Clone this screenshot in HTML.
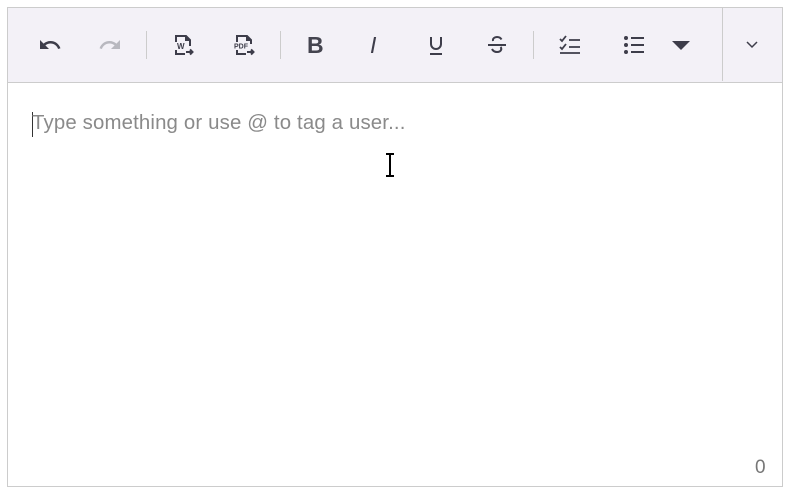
<!DOCTYPE html>
<html><head><meta charset="utf-8"><style>
html,body{margin:0;padding:0;background:#fff;width:789px;height:493px;overflow:hidden;font-family:"Liberation Sans",Roboto,sans-serif}
.box{position:absolute;left:7px;top:7px;width:774px;height:478px;border:1px solid #ccc;}
.tb{position:absolute;left:0;top:0;width:774px;height:74px;background:#f3f1f7;border-bottom:1px solid #ccc}
.ic{position:absolute;top:25px}
.sep{position:absolute;top:23px;width:1px;height:28px;background:#ccc}
.ph{position:absolute;left:24px;top:104px;font-size:20.4px;color:#8a8a8a;letter-spacing:0.15px}
.caret{position:absolute;left:24px;top:104px;width:1px;height:25px;background:#333}
.cnt{position:absolute;left:747px;top:449px;font-size:19px;color:#777}
</style></head><body>
<div class="box">
<div class="tb">
<svg class="ic" style="left:30px" width="24" height="24" viewBox="0 0 24 24"><path d="M12.5 8c-2.65 0-5.05 1-6.9 2.6L2 7v9h9l-3.62-3.62c1.39-1.16 3.160-1.88 5.12-1.88 3.54 0 6.55 2.310 7.6 5.5l2.37-.78C21.08 11.03 17.15 8 12.5 8z" fill="#3d3d4a"/></svg>
<svg class="ic" style="left:90px" width="24" height="24" viewBox="0 0 24 24"><path d="M18.4 10.6C16.55 9 14.15 8 11.5 8c-4.65 0-8.58 3.03-9.960 7.22L3.9 16c1.05-3.19 4.05-5.5 7.6-5.5 1.95 0 3.73.72 5.12 1.88L13 16h9V7l-3.6 3.6z" fill="#b8b8bf"/></svg>
<div class="sep" style="left:138px"></div>
<svg class="ic" style="left:163px" width="24" height="24" viewBox="0 0 24 24" fill="none" stroke="#3d3d4a" stroke-width="2"><path d="M5 9V3h10l4 4v6M5 17v4h9"/><path d="M15 3v4h4" fill="#3d3d4a"/><text x="6" y="16" font-size="8" font-weight="bold" fill="#3d3d4a" stroke="none" font-family="Liberation Sans">W</text><path d="M15 19h6M19 16.5l2.5 2.5-2.5 2.5"/></svg>
<svg class="ic" style="left:224px" width="24" height="24" viewBox="0 0 24 24" fill="none" stroke="#3d3d4a" stroke-width="2"><path d="M5 9V3h10l4 4v4M5 17v4h9"/><path d="M15 3v4h4" fill="#3d3d4a"/><text x="2" y="15.5" font-size="7" font-weight="bold" fill="#3d3d4a" stroke="none" font-family="Liberation Sans">PDF</text><path d="M15 19h6M19 16.5l2.5 2.5-2.5 2.5"/></svg>
<div class="sep" style="left:272px"></div>
<div class="ic" style="left:299px;top:24px;font-size:23px;font-weight:bold;color:#44444f">B</div>
<div class="ic" style="left:362px;top:24px;font-size:23px;font-style:italic;color:#3d3d4a">I</div>
<svg class="ic" style="left:416px" width="24" height="24" viewBox="0 0 24 24" fill="none" stroke="#3d3d4a" stroke-width="2"><path d="M7 4v7a5 5 0 0 0 10 0V4M6 21h12"/></svg>
<svg class="ic" style="left:477px" width="24" height="24" viewBox="0 0 24 24" fill="none" stroke="#3d3d4a" stroke-width="2"><path d="M16.5 6.5C15.5 4.5 13.5 4 12 4 9.5 4 7.5 5.5 8 8M3 12h18M15.5 14c1.5 1.5 1 5-3.5 5-2 0-4-1-5-3"/></svg>
<div class="sep" style="left:525px"></div>
<svg class="ic" style="left:550px" width="24" height="24" viewBox="0 0 24 24" fill="none" stroke="#3d3d4a" stroke-width="1.8"><path d="M2 6l2 2 4-5M2 14l2 2 4-5M11 7h11M11 14h11M2 20h20"/></svg>
<svg class="ic" style="left:614px" width="24" height="24" viewBox="0 0 24 24" fill="#3d3d4a"><circle cx="4" cy="5" r="2"/><circle cx="4" cy="12" r="2"/><circle cx="4" cy="19" r="2"/><rect x="9" y="4" width="13" height="2"/><rect x="9" y="11" width="13" height="2"/><rect x="9" y="18" width="13" height="2"/></svg>
<svg class="ic" style="left:663px;top:33px" width="20" height="10" viewBox="0 0 20 10"><path d="M1 0h18l-9 9z" fill="#3d3d4a"/></svg>
<div class="sep" style="left:714px;top:0;height:73px"></div>
<svg class="ic" style="left:737px;top:32px" width="14" height="10" viewBox="0 0 14 10"><path d="M2 2l5 5 5-5" fill="none" stroke="#3d3d4a" stroke-width="1.5"/></svg>
</div>
<div class="caret"></div>
<div class="ph">Type something or use @ to tag a user...</div>
<svg style="position:absolute;left:375px;top:145px" width="14" height="24" viewBox="0 0 14 24"><path d="M3 1h8M7 1v22M3 23h8" stroke="#000" stroke-width="2" fill="none"/></svg>
<div class="cnt">0</div>
</div>
</body></html>
